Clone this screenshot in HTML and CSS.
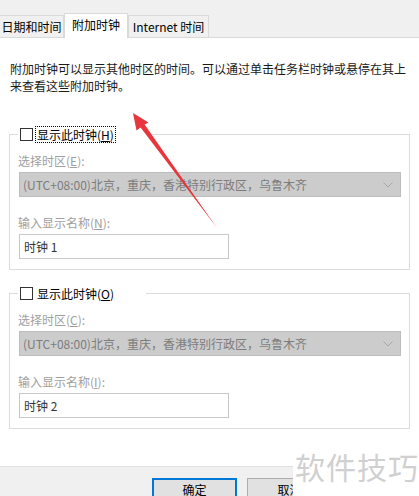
FILE: index.html
```html
<!DOCTYPE html>
<html lang="zh-CN">
<head>
  <meta charset="UTF-8">
  <title>附加时钟</title>
  <link rel="stylesheet" href="styles.css">
</head>
<body>
  <div class="dialog">
    <div class="tabs">
      <div class="tab tab-date">日期和时间</div>
      <div class="tab tab-clock active">附加时钟</div>
      <div class="tab tab-net">Internet 时间</div>
    </div>

    <div class="panel">
      <p class="intro">附加时钟可以显示其他时区的时间。可以通过单击任务栏时钟或悬停在其上来查看这些附加时钟。</p>

      <fieldset class="group group-one">
        <legend class="legend">
          <span class="check"></span>
          <span class="check-label focused">显示此时钟(<u>H</u>)</span>
        </legend>
        <div class="field-label">选择时区(<u>E</u>):</div>
        <div class="select">
          <span>(UTC+08:00)北京，重庆，香港特别行政区，乌鲁木齐</span>
          <svg class="chevron" width="10" height="6" viewBox="0 0 10 6"><path d="M0.5 0.5 L5 5 L9.5 0.5" fill="none" stroke="#a8a8a8" stroke-width="1"/></svg>
        </div>
        <div class="field-label">输入显示名称(<u>N</u>):</div>
        <div class="text-input">时钟 1</div>
      </fieldset>

      <fieldset class="group group-two">
        <legend class="legend">
          <span class="check"></span>
          <span class="check-label">显示此时钟(<u>O</u>)</span>
        </legend>
        <div class="field-label">选择时区(<u>C</u>):</div>
        <div class="select">
          <span>(UTC+08:00)北京，重庆，香港特别行政区，乌鲁木齐</span>
          <svg class="chevron" width="10" height="6" viewBox="0 0 10 6"><path d="M0.5 0.5 L5 5 L9.5 0.5" fill="none" stroke="#a8a8a8" stroke-width="1"/></svg>
        </div>
        <div class="field-label">输入显示名称(<u>I</u>):</div>
        <div class="text-input">时钟 2</div>
      </fieldset>
    </div>

    <div class="footer">
      <button class="btn btn-default">确定</button>
      <button class="btn">取消</button>
    </div>

    <!-- annotation arrow drawn over the dialog -->
    <svg class="arrow" width="419" height="496" viewBox="0 0 419 496">
      <polygon points="133,113 148.5,122.5 144.6,124.6 217,228 140.6,127.6 136.5,130.6" fill="#e8373c"/>
    </svg>

    <div class="watermark">软件技巧</div>
  </div>
</body>
</html>
```

FILE: styles.css
```css
body {
  margin: 0;
  background-color: #fff;
  font-family: "Noto Sans CJK SC", "Noto Sans", sans-serif;
  font-size: 12px;
  color: #000;
}
.dialog {
  position: relative;
  width: 419px;
  height: 496px;
  overflow: hidden;
}
.tabs {
  display: flex;
  align-items: flex-end;
  height: 37px;
  background-color: #f0f0f0;
  border-bottom: 1px solid #d9d9d9;
}
.tab {
  box-sizing: border-box;
  height: 22px;
  line-height: 21px;
  text-align: center;
  border: 1px solid #d9d9d9;
  border-bottom: none;
  background-color: #f0f0f0;
  color: #000;
  white-space: nowrap;
}
.tab-date {
  width: 65px;
  margin-left: -1px;
}
.tab-clock {
  width: 64px;
}
.tab-net {
  width: 81px;
}
.tab.active {
  height: 25px;
  line-height: 21px;
  margin-bottom: -1px;
  background-color: #fff;
  position: relative;
}
.panel {
  box-sizing: border-box;
  height: 428px;
  padding: 22px 9px 0 10px;
  background-color: #fff;
}
.intro {
  margin: 0;
  line-height: 17px;
  color: #1a1a1a;
}
.group {
  margin: 0 0 0 -1px;
  padding: 0 8px 10px 8px;
  border: 1px solid #dcdcdc;
  min-inline-size: 0;
}
.group-one {
  margin-top: 32px;
}
.group-two {
  margin-top: 15px;
}
.legend {
  display: flex;
  align-items: center;
  padding: 0 30px 0 2px;
}
.check {
  box-sizing: border-box;
  width: 13px;
  height: 13px;
  border: 1px solid #333;
  background-color: #fff;
  margin-right: 2px;
}
.check-label {
  line-height: 15px;
  border: 1px dotted transparent;
  padding: 0 1px;
  color: #000;
}
.check-label.focused {
  border-color: #000;
}
.field-label {
  margin-top: 9px;
  line-height: 17px;
  color: #a0a0a0;
}
.select {
  box-sizing: border-box;
  display: flex;
  align-items: center;
  justify-content: space-between;
  height: 25px;
  margin: 3px 0 0 1px;
  padding: 0 7px 0 3px;
  background-color: #cccccc;
  border: 1px solid #bdbdbd;
  color: #7c7c7c;
  white-space: nowrap;
}
.select + .field-label {
  margin-top: 17px;
}
.text-input {
  box-sizing: border-box;
  width: 210px;
  height: 25px;
  margin: 3px 0 0 1px;
  padding: 0 4px;
  line-height: 23px;
  border: 1px solid #c8c8c8;
  color: #333;
}
.footer {
  display: flex;
  gap: 10px;
  height: 30px;
  padding: 11px 0 0 152px;
  box-sizing: border-box;
  background-color: #f0f0f0;
  border-top: 1px solid #dfdfdf;
}
.btn {
  box-sizing: border-box;
  width: 85px;
  height: 23px;
  padding: 0;
  font-family: inherit;
  font-size: 12px;
  color: #000;
  background-color: #e1e1e1;
  border: 1px solid #adadad;
}
.btn-default {
  border-color: #0078d7;
  box-shadow: inset 0 0 0 1px #0078d7;
}
.arrow {
  position: absolute;
  left: 0;
  top: 0;
  pointer-events: none;
}
.watermark {
  position: absolute;
  left: 293px;
  top: 447px;
  width: 126px;
  height: 49px;
  background-color: #fff;
  color: #d0d0d0;
  font-size: 30px;
  line-height: 38px;
  letter-spacing: 1px;
  padding-left: 2px;
  box-sizing: border-box;
}
```
